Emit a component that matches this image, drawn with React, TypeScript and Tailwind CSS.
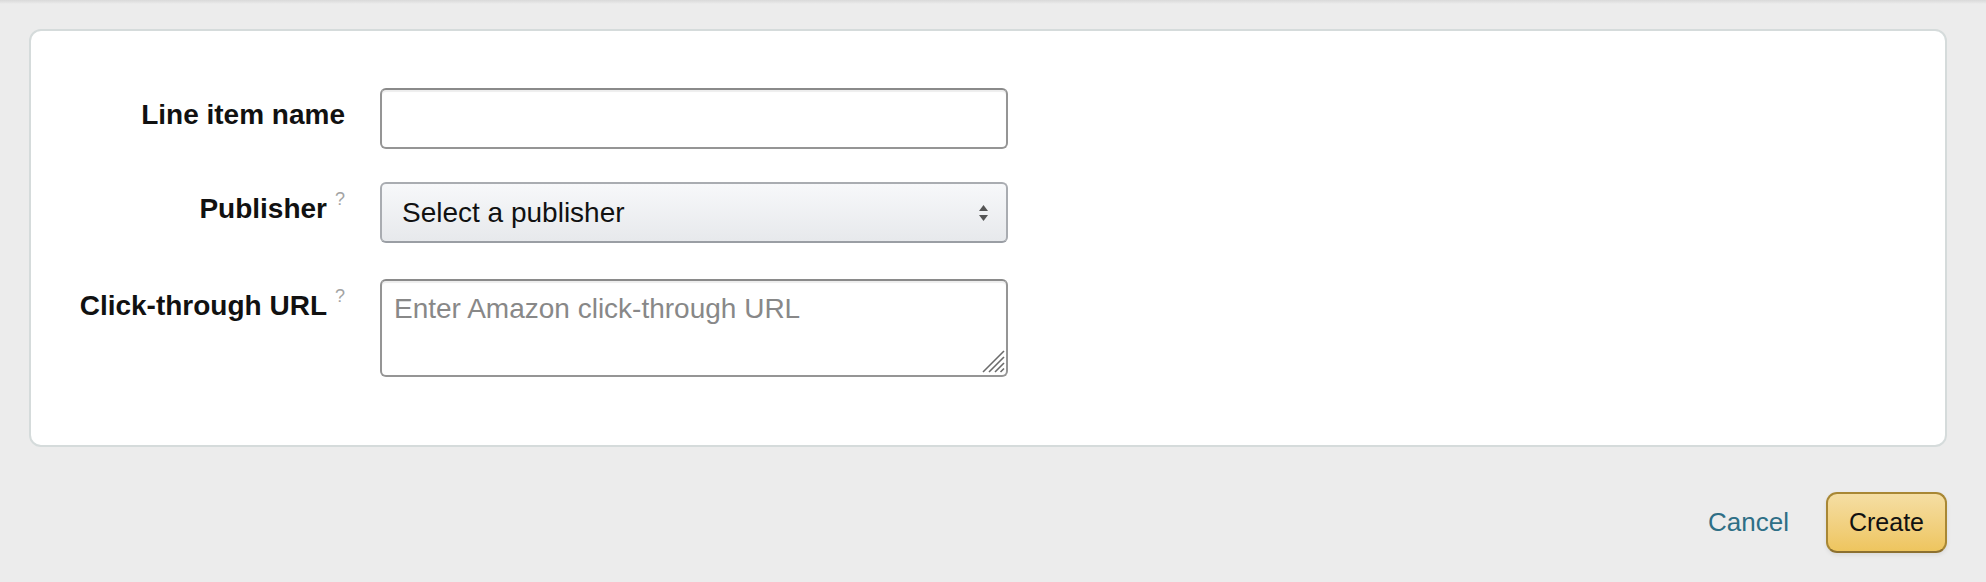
import React from "react";

const font = { fontFamily: '"Liberation Sans", Arial, sans-serif' };

function Row({ label, help, children, h }: { label: string; help?: boolean; children: React.ReactNode; h: string }) {
  return (
    <div className={`flex items-start ${h}`}>
      <div className="w-[314px] flex justify-end pt-[10px]">
        <div className="flex items-start">
          <span className="text-[28px] leading-[34px] font-bold text-[#111111]">{label}</span>
          {help && <span className="ml-[8px] mt-[-2px] text-[18px] leading-[18px] text-[#a3a3a3]">?</span>}
        </div>
      </div>
      <div className="ml-[35px] w-[628px] h-full">{children}</div>
    </div>
  );
}

export default function App() {
  return (
    <div style={font} className="min-h-[582px] w-full bg-[#ececec]">
      <div className="h-[4px] w-full bg-gradient-to-b from-[#d9d9d9] to-[#ececec]" />
      <div className="pl-[29px] pr-[39px] pt-[25px]">
        <div className="w-full rounded-[12px] border-2 border-[#d5dbdb] bg-white pt-[57px] pb-[68px]">
          <Row label="Line item name" h="h-[61px]">
            <input
              className="h-full w-full rounded-[6px] border-2 border-[#959595] border-t-[#8a8a8a] bg-white px-[12px] text-[28px] text-[#111] shadow-[inset_0_2px_1px_rgba(0,0,0,0.07)] outline-none"
              style={font}
            />
          </Row>
          <div className="h-[33px]" />
          <Row label="Publisher" help h="h-[61px]">
            <div className="flex h-full w-full items-center justify-between rounded-[6px] border-2 border-[#a9acb1] border-b-[#9a9ea4] bg-gradient-to-b from-[#f7f8fa] to-[#e7e9ec] pl-[20px] pr-[17px]">
              <span className="text-[28px] leading-[34px] text-[#111111]">Select a publisher</span>
              <svg width="11" height="18" viewBox="0 0 11 18">
                <path d="M5.5 1 L10 7 L1 7 Z" fill="#555" />
                <path d="M1 11 L10 11 L5.5 17 Z" fill="#555" />
              </svg>
            </div>
          </Row>
          <div className="h-[36px]" />
          <Row label="Click-through URL" help h="h-[98px]">
            <div className="relative h-full w-full">
              <textarea
                placeholder="Enter Amazon click-through URL"
                className="h-full w-full resize-none rounded-[6px] border-2 border-[#959595] border-t-[#8a8a8a] bg-white pl-[12px] pt-[11px] text-[28px] leading-[34px] text-[#111] shadow-[inset_0_2px_1px_rgba(0,0,0,0.07)] outline-none placeholder:text-[#888888]"
                style={font}
              />
              <svg className="absolute right-[3px] bottom-[4px]" width="24" height="24" viewBox="0 0 24 24">
                <line x1="23" y1="2" x2="2" y2="23" stroke="#6b6b6b" strokeWidth="1.6" />
                <line x1="23" y1="8" x2="8" y2="23" stroke="#6b6b6b" strokeWidth="1.6" />
                <line x1="23" y1="14" x2="14" y2="23" stroke="#6b6b6b" strokeWidth="1.6" />
                <line x1="23" y1="19.5" x2="19.5" y2="23" stroke="#6b6b6b" strokeWidth="1.6" />
              </svg>
            </div>
          </Row>
        </div>
        <div className="mt-[45px] flex items-center justify-end gap-[37px]">
          <span className="text-[26px] text-[#2e6f86]">Cancel</span>
          <button
            style={font}
            className="flex h-[61px] w-[121px] items-center justify-center rounded-[11px] border-2 border-[#a88734] border-b-[#8c7030] bg-gradient-to-b from-[#f5dea3] to-[#eec55e] text-[25px] text-[#111] shadow-[0_2px_4px_rgba(0,0,0,0.08)]"
          >
            Create
          </button>
        </div>
      </div>
    </div>
  );
}
